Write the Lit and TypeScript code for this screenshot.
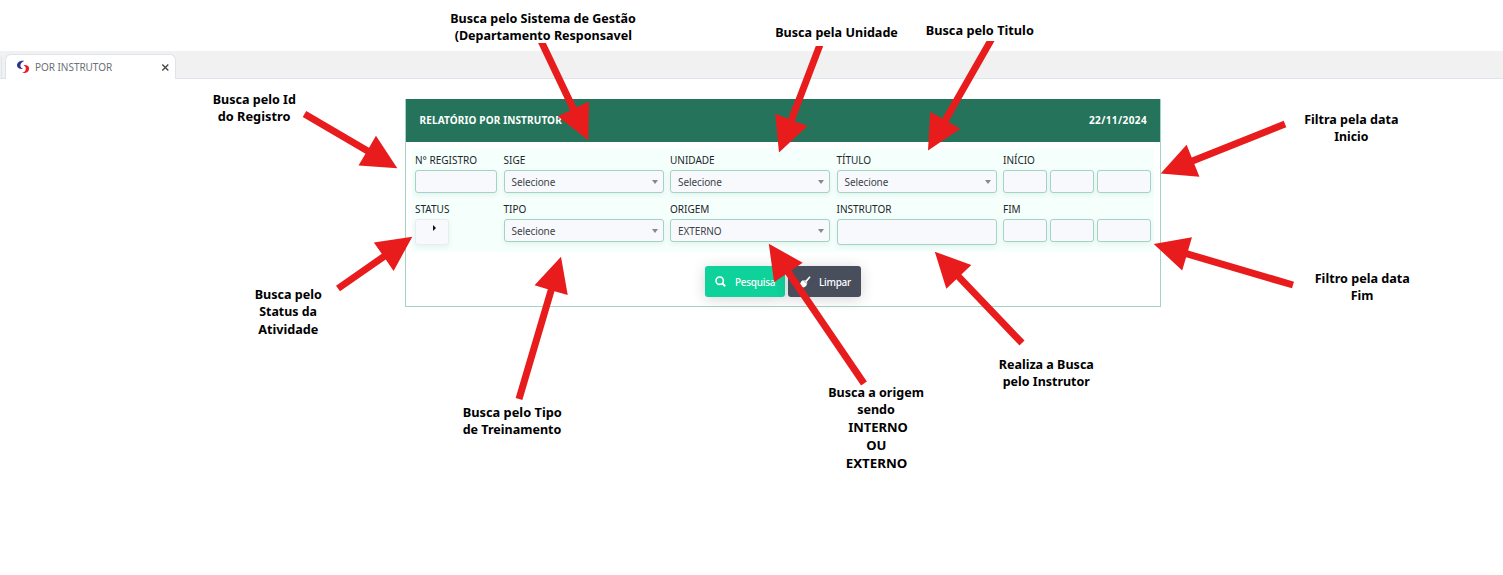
import { LitElement, html, css, svg } from "lit";
import { customElement } from "lit/decorators.js";

interface Arrow { tip: [number, number]; tail: [number, number]; flat?: boolean; }

const ARROWS: Arrow[] = [
  { tip: [397.3, 168.2], tail: [304.5, 114] },
  { tip: [588.3, 140.3], tail: [542, 43], flat: true },
  { tip: [779, 152.5], tail: [819.5, 46], flat: true },
  { tip: [928, 150.5], tail: [990.5, 41], flat: true },
  { tip: [1160.7, 173.6], tail: [1285, 124] },
  { tip: [1153.7, 244], tail: [1293, 285] },
  { tip: [412.3, 236.8], tail: [338, 288.5] },
  { tip: [561, 256.8], tail: [519, 399] },
  { tip: [768.8, 243.7], tail: [864, 383.5] },
  { tip: [934.8, 251.7], tail: [1022, 343] },
];

// text, left edge, right edge, baseline
const NOTES: [string, number, number, number][] = [
  ["Busca pelo Id", 213, 296, 104],
  ["do Registro", 218, 290.5, 121],
  ["Busca pelo", 255, 322, 299],
  ["Status da", 259.5, 317, 316],
  ["Atividade", 258.5, 318.5, 334],
  ["Busca pelo Sistema de Gestão", 450.5, 636, 23],
  ["(Departamento Responsavel", 455, 632, 40],
  ["Busca pela Unidade", 775.5, 898, 37],
  ["Busca pelo Titulo", 926, 1034, 35],
  ["Filtra pela data", 1304.5, 1398.5, 124],
  ["Inicio", 1334.5, 1368.5, 141],
  ["Filtro pela data", 1315, 1410, 283],
  ["Fim", 1351, 1373.5, 300],
  ["Realiza a Busca", 999, 1094, 369],
  ["pelo Instrutor", 1003, 1090, 386],
  ["Busca pelo Tipo", 463, 562, 417],
  ["de Treinamento", 463, 561.5, 434],
  ["Busca a origem", 828.5, 924, 397],
  ["sendo", 857.5, 895, 414],
  ["INTERNO", 848.5, 908, 432],
  ["OU", 866.5, 886.5, 450],
  ["EXTERNO", 846, 907.5, 468],
];

function arrowPoints({ tip, tail, flat }: Arrow): string {
  const dx = tail[0] - tip[0], dy = tail[1] - tip[1];
  const len = Math.hypot(dx, dy);
  const ux = dx / len, uy = dy / len, nx = -uy, ny = ux;
  const at = (t: number, w: number) => [tip[0] + ux * t + nx * w, tip[1] + uy * t + ny * w];
  const half = 3.5, head = 34.8, wing = 17.3;
  const end = (w: number) => at(flat ? (tail[1] - tip[1] - ny * w) / uy : len, w);
  return [at(0, 0), at(head, wing), at(head, half), end(half), end(-half), at(head, -half), at(head, -wing)]
    .map((p) => p.map((v) => v.toFixed(2)).join(",")).join(" ");
}

@customElement("app-root")
export class AppRoot extends LitElement {
  static styles = css`
    :host { display: block; position: relative; width: 1503px; height: 575px; overflow: hidden; background: #fff;
      font-family: "Noto Sans", sans-serif; font-size: 10px; color: #212529; }
    * { box-sizing: border-box; }
    .page { padding-top: 51px; display: flex; flex-direction: column; }
    .tabs { height: 28px; background: #f1f1f1; border-bottom: 1px solid #dde4ed; display: flex; align-items: flex-end; gap: 4px; }
    .previous { width: 2px; height: 22px; border-right: 1px solid #dde4ed; border-radius: 0 5px 0 0; }
    .tab { width: 171px; height: 25px; margin: 0 0 -1px -1px; background: #fff; border: 1px solid #dde4ed; border-bottom: 0;
      border-radius: 6px 6px 0 0; display: flex; align-items: center; padding: 0 5px 0 10px; color: #6c6f75; }
    .tab span { flex: 1; margin-left: 5px; letter-spacing: -.04px; line-height: 14px; padding-bottom: 1px; }
    .tab svg { display: block; }
    .panel { margin: 20px 0 0 405px; width: 756px; height: 208px; border: 1px solid #a3d3c4; border-top: 0; }
    .head { height: 43px; background: #24735a; color: #fff; font-weight: 700; display: flex; align-items: center;
      justify-content: space-between; padding: 0 13px 2px 13.5px; }
    .title { letter-spacing: .14px; }
    .date { letter-spacing: .4px; }
    .fields { margin: 6px 6px 0; height: 104px; background: #f5fffc; padding: 4px 3px 0; display: grid;
      grid-template-columns: 82px 160px 160px 160px 148px; column-gap: 6.5px; grid-template-rows: 49px 49px; }
    .label { height: 18px; line-height: 17px; white-space: nowrap; }
    .box { height: 23px; background: #f8f9fc; border: 1px solid #a3d3c4; border-radius: 3px; box-shadow: 0 2px 5px rgba(60,110,95,.09);
      display: flex; align-items: center; justify-content: space-between; padding: 0 5px 0 7px; color: #3d434a; }
    .box span { letter-spacing: -.1px; }
    .box.tall { height: 26px; }
    .caret { width: 0; height: 0; border: 3px solid transparent; border-top: 4px solid #888; border-bottom: 0; }
    .box.status { width: 34px; height: 26px; border-color: #e9ecef; align-items: flex-start; padding: 5px 0 0 17px; }
    .play { width: 0; height: 0; border: 3px solid transparent; border-left: 3px solid #111; border-right: 0; }
    .dates { display: grid; grid-template-columns: 44px 44px 54px; gap: 3px; }
    .actions { display: flex; justify-content: center; gap: 3px; margin-top: 14px; }
    .button { height: 31px; border-radius: 3px; color: #fff; display: flex; align-items: center; font-weight: 500;
      letter-spacing: -.28px; box-shadow: 0 2px 14px rgba(40,40,60,.2); }
    .button svg { flex: none; }
    .search { width: 80px; background: #0fd19a; padding-left: 10px; gap: 9px; }
    .clear { width: 73px; background: #484e5c; padding-left: 11px; gap: 8px; }
    .overlay { position: absolute; inset: 0; pointer-events: none; }
    .note { font: 700 12.7px "Noto Sans", sans-serif; fill: #000; }
    .arrow { fill: #e81c1c; }
  `;

  private select(label: string, value: string) {
    return html`<div><div class="label">${label}</div><div class="box"><span>${value}</span><i class="caret"></i></div></div>`;
  }

  private input(label: string, tall = false) {
    return html`<div><div class="label">${label}</div><div class="box ${tall ? "tall" : ""}"></div></div>`;
  }

  private dates(label: string) {
    return html`<div><div class="label">${label}</div>
      <div class="dates"><div class="box"></div><div class="box"></div><div class="box"></div></div></div>`;
  }

  render() {
    return html`
      <div class="page">
        <div class="tabs">
          <div class="previous"></div>
          <div class="tab">
            <svg width="14" height="14" viewBox="0 0 14 14">
              <path d="M8.200 1C4 .2.900 2.600 1 5.600c.2 2.700 3 3.800 6.200 3.300C5.100 8 4.200 6.900 4.400 5.300 4.600 3.300 6 1.900 8.200 1Z" fill="#2e3192"/>
              <path d="M7.500 5.200c3.500-.5 5.600.8 5.600 3.200 0 3.300-3.300 5.200-7 4.500 2.200-.7 3.600-2.100 3.700-4 .1-1.700-.5-2.900-2.300-3.700Z" fill="#ed1c24"/>
            </svg>
            <span>POR INSTRUTOR</span>
            <svg width="9" height="9" viewBox="0 0 9 9"><path d="M1.300 1.500l6 6M7.300 1.500l-6 6" stroke="#444" stroke-width="1.300"/></svg>
          </div>
        </div>
        <div class="panel">
          <div class="head"><span class="title">RELATÓRIO POR INSTRUTOR</span><span class="date">22/11/2024</span></div>
          <div class="fields">
            ${this.input("N° REGISTRO")}
            ${this.select("SIGE", "Selecione")}
            ${this.select("UNIDADE", "Selecione")}
            ${this.select("TÍTULO", "Selecione")}
            ${this.dates("INÍCIO")}
            <div><div class="label">STATUS</div><div class="box status"><i class="play"></i></div></div>
            ${this.select("TIPO", "Selecione")}
            ${this.select("ORIGEM", "EXTERNO")}
            ${this.input("INSTRUTOR", true)}
            ${this.dates("FIM")}
          </div>
          <div class="actions">
            <div class="button search">
              <svg width="11" height="11" viewBox="0 0 11 11" fill="none" stroke="#fff"><circle cx="4.700" cy="4.700" r="3.700" stroke-width="1.600"/><path d="M7.300 7.400l2.900 2.900" stroke-width="2"/></svg>
              <span>Pesquisa</span>
            </div>
            <div class="button clear">
              <svg width="12" height="12" viewBox="0 0 12 12" fill="#fff"><path d="M10.500.3l1.100 1-3.700 4.400.5 2-3.800-3.600 2 .4Z"/><path d="M4.300 4.200l3.700 3.600C7.700 10 6.300 11.300 4.300 11.500L.5 10.500l1.500-1-1.700-.6C1.600 7.800 1.500 4.800 4.300 4.200Z"/></svg>
              <span>Limpar</span>
            </div>
          </div>
        </div>
      </div>
      <svg class="overlay" width="1503" height="575" viewBox="0 0 1503 575">
        ${ARROWS.map((a) => svg`<polygon class="arrow" points=${arrowPoints(a)}></polygon>`)}
        ${NOTES.map(([t, l, r, y]) => svg`<text class="note" x=${l - 0.3} y=${y} textLength=${r - l + 0.2} lengthAdjust="spacingAndGlyphs">${t}</text>`)}
      </svg>
    `;
  }
}
